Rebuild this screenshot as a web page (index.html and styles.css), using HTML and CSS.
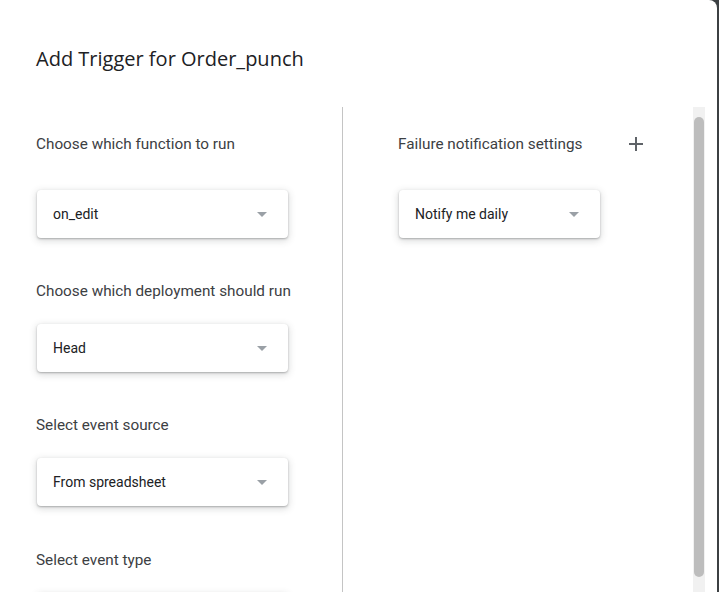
FILE: index.html
```html
<!DOCTYPE html>
<html>
<head>
<meta charset="utf-8">
<link rel="stylesheet" href="styles.css">
</head>
<body>
<div class="dialog">
  <div class="header">
    <h1 class="title">Add Trigger for Order_punch</h1>
  </div>
  <div class="content">
    <div class="col-left">
      <div class="label first">Choose which function to run</div>
      <div class="select first-select"><span>on_edit</span><i class="arrow"></i></div>
      <div class="label">Choose which deployment should run</div>
      <div class="select"><span>Head</span><i class="arrow"></i></div>
      <div class="label">Select event source</div>
      <div class="select"><span>From spreadsheet</span><i class="arrow"></i></div>
      <div class="label last">Select event type</div>
      <div class="select"></div>
    </div>
    <div class="col-right">
      <div class="label-row">
        <div class="label first">Failure notification settings</div>
        <svg class="plus" width="14" height="14" viewBox="0 0 14 14"><path d="M7 0v14M0 7h14" stroke="#5f6368" stroke-width="2"/></svg>
      </div>
      <div class="select narrow first-select"><span>Notify me daily</span><i class="arrow"></i></div>
    </div>
    <div class="scrollbar"><div class="thumb"></div></div>
  </div>
</div>
</body>
</html>
```
FILE: styles.css
```css
html, body {
  margin: 0;
  padding: 0;
  height: 592px;
  overflow: hidden;
}
body {
  background: #3c4043;
  font-family: Roboto, "Liberation Sans", sans-serif;
}
.dialog {
  width: 717px;
  height: 592px;
  background: #fff;
  border-top-right-radius: 8px;
  display: flex;
  flex-direction: column;
  overflow: hidden;
}
.header {
  height: 107px;
  flex: none;
  padding-left: 36px;
  box-sizing: border-box;
}
.title {
  margin: 0;
  padding-top: 45px;
  font-family: "Open Sans", Roboto, sans-serif;
  font-weight: 400;
  font-size: 20px;
  line-height: 28px;
  color: #202124;
}
.content {
  flex: 1;
  display: flex;
  overflow: hidden;
}
.col-left {
  width: 343px;
  flex: none;
  box-sizing: border-box;
  border-right: 1px solid #c4c4c4;
  padding-left: 36px;
}
.col-right {
  flex: 1;
  padding-left: 55px;
}
.label {
  height: 20px;
  line-height: 20px;
  font-size: 15.3px;
  color: #3c4043;
  margin-top: 43px;
  white-space: nowrap;
}
.label.first {
  margin-top: 27px;
}
.label.last {
  margin-top: 44px;
}
.label-row {
  width: 245px;
  display: flex;
  justify-content: space-between;
  align-items: flex-end;
}
.plus {
  margin-bottom: 3px;
}
.select {
  margin-top: 23px;
  margin-left: 1px;
  width: 251px;
  height: 48px;
  box-sizing: border-box;
  border-radius: 4px;
  background: #fff;
  box-shadow: 0 1px 2px rgba(60,64,67,.35), 0 2px 7px 1px rgba(60,64,67,.18);
  display: flex;
  align-items: center;
  justify-content: space-between;
  padding: 0 21px 0 16px;
  font-size: 14px;
  color: #202124;
}
.select.first-select {
  margin-top: 36px;
}
.select.narrow {
  width: 201px;
  margin-left: 1px;
}
.arrow {
  width: 0;
  height: 0;
  border-left: 5px solid transparent;
  border-right: 5px solid transparent;
  border-top: 5px solid #9aa0a6;
}
.scrollbar {
  width: 12px;
  flex: none;
  margin-right: 12px;
  background: #f1f1f1;
  padding-top: 10px;
  box-sizing: border-box;
}
.thumb {
  width: 10px;
  margin-left: 1px;
  height: 460px;
  border-radius: 5px;
  background: #bdbdbd;
}
```
